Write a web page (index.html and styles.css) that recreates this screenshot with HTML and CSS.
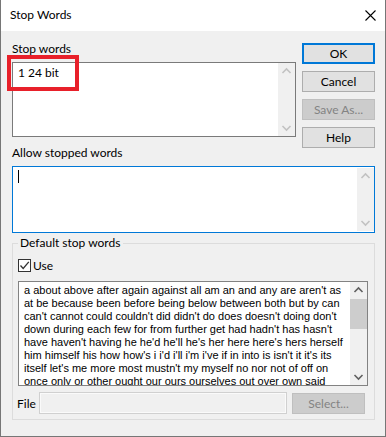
FILE: index.html
```html
<!DOCTYPE html>
<html>
<head>
<meta charset="utf-8">
<link rel="stylesheet" href="styles.css">
</head>
<body>
<div class="window">
  <div class="titlebar">
    <span class="title">Stop Words</span>
    <svg class="close" width="11" height="11" viewBox="0 0 11 11"><path d="M0.5 0.5 L10.5 10.5 M10.5 0.5 L0.5 10.5" stroke="#000" stroke-width="1.1" fill="none"/></svg>
  </div>
  <div class="content">
    <div class="toprow">
      <div class="leftcol">
        <div class="label lbl-stop">Stop words</div>
        <div class="textbox stopbox">
          <div class="tb-text">1 24 bit</div>
          <div class="vscroll">
            <svg class="arrow" width="17" height="17" viewBox="0 0 17 17"><path d="M4.5 10 L8.5 6 L12.5 10" stroke="#c2c2c2" stroke-width="1.6" fill="none"/></svg>
            <svg class="arrow" width="17" height="17" viewBox="0 0 17 17"><path d="M4.5 7 L8.5 11 L12.5 7" stroke="#c2c2c2" stroke-width="1.6" fill="none"/></svg>
          </div>
        </div>
      </div>
      <div class="buttons">
        <div class="btn btn-default">OK</div>
        <div class="btn">Cancel</div>
        <div class="btn btn-disabled">Save As...</div>
        <div class="btn">Help</div>
      </div>
    </div>
    <div class="label lbl-allow">Allow stopped words</div>
    <div class="textbox allowbox">
      <div class="tb-text"><span class="caret"></span></div>
      <div class="vscroll">
        <svg class="arrow" width="17" height="17" viewBox="0 0 17 17"><path d="M4.5 10 L8.5 6 L12.5 10" stroke="#c2c2c2" stroke-width="1.6" fill="none"/></svg>
        <svg class="arrow" width="17" height="17" viewBox="0 0 17 17"><path d="M4.5 7 L8.5 11 L12.5 7" stroke="#c2c2c2" stroke-width="1.6" fill="none"/></svg>
      </div>
    </div>
    <fieldset class="group">
      <legend>Default stop words</legend>
      <label class="check">
        <span class="box"><svg width="11" height="11" viewBox="0 0 11 11"><path d="M1.5 5.5 L4.2 8.5 L9.8 1.8" stroke="#333" stroke-width="1.3" fill="none"/></svg></span>
        <span>Use</span>
      </label>
      <div class="listbox">
        <div class="list-text">a about above after again against all am an and any are aren't as
at be because been before being below between both but by can
can't cannot could couldn't did didn't do does doesn't doing don't
down during each few for from further get had hadn't has hasn't
have haven't having he he'd he'll he's her here here's hers herself
him himself his how how's i i'd i'll i'm i've if in into is isn't it it's its
itself let's me more most mustn't my myself no nor not of off on
once only or other ought our ours ourselves out over own said</div>
        <div class="vscroll list-scroll">
          <svg class="arrow" width="17" height="17" viewBox="0 0 17 17"><path d="M4.5 10 L8.5 6 L12.5 10" stroke="#606060" stroke-width="1.6" fill="none"/></svg>
          <div class="thumb"></div>
          <div class="track"></div>
          <svg class="arrow" width="17" height="17" viewBox="0 0 17 17"><path d="M4.5 7 L8.5 11 L12.5 7" stroke="#606060" stroke-width="1.6" fill="none"/></svg>
        </div>
      </div>
      <div class="filerow">
        <span class="file-label">File</span>
        <div class="filebox"></div>
        <div class="btn btn-disabled select-btn">Select...</div>
      </div>
    </fieldset>
  </div>
  <div class="redmark"></div>
</div>
</body>
</html>
```

FILE: styles.css
```css
* { box-sizing: border-box; }
html, body { margin: 0; padding: 0; background: #f0f0f0; }
body {
  font-family: Lato, "Noto Sans", sans-serif;
  font-size: 12px;
  color: #000;
}
.window {
  position: relative;
  width: 386px;
  height: 437px;
  background: #f0f0f0;
  border: 1px solid #767676;
  border-top: none;
  overflow: hidden;
}
.titlebar {
  height: 31px;
  background: #fff;
  display: flex;
  align-items: center;
  justify-content: space-between;
  padding: 0 9px 0 9px;
}
.title { font-size: 12px; line-height: 14px; margin-top: -1px; }
.close { margin-top: -1px; }
.content {
  padding: 12px 10px 0 11px;
}
.toprow {
  display: flex;
  gap: 6px;
  height: 105px;
}
.leftcol { width: 284px; display: flex; flex-direction: column; }
.label { line-height: 12px; white-space: nowrap; }
.lbl-stop { height: 19px; margin-top: 0; }
.lbl-allow { line-height: 10px; margin-bottom: 8px; }
.textbox {
  position: relative;
  background: #fff;
  border: 1px solid #7a7a7a;
  display: flex;
}
.stopbox { height: 75px; }
.allowbox { height: 67px; border-color: #0078d7; width: 363px; }
.tb-text {
  flex: 1;
  padding: 3px 5px;
  line-height: 14px;
}
.caret {
  display: inline-block;
  width: 1px;
  height: 13px;
  background: #000;
  vertical-align: top;
  margin-top: 0;
}
.vscroll {
  width: 17px;
  background: #f0f0f0;
  display: flex;
  flex-direction: column;
  justify-content: space-between;
  flex: none;
  margin: 1px 0;
}
.stopbox .vscroll { margin: 0; }
.arrow { display: block; flex: none; }
.buttons {
  width: 73px;
  display: flex;
  flex-direction: column;
  gap: 7px;
}
.btn {
  height: 21px;
  background: #e1e1e1;
  border: 1px solid #adadad;
  display: flex;
  align-items: center;
  justify-content: center;
  line-height: 14px;
  white-space: nowrap;
}
.btn-default { border: 2px solid #0078d7; }
.btn-disabled { background: #cccccc; border-color: #bfbfbf; color: #838383; }

.group {
  margin: 3px 0 0 0;
  width: 363px;
  border: 1px solid #dcdcdc;
  padding: 0 6px 5px 5px;
}
.group legend {
  padding: 0 3px 0 2px;
  margin-left: 0;
  line-height: 14px;
}
.check {
  display: flex;
  align-items: center;
  gap: 2px;
  margin-top: 9px;
  height: 13px;
  line-height: 14px;
}
.check .box {
  width: 13px;
  height: 13px;
  border: 1px solid #333;
  background: #fff;
  display: flex;
  align-items: center;
  justify-content: center;
}
.check .box svg { display: block; }
.listbox {
  margin-top: 9px;
  width: 350px;
  height: 105px;
  background: #fff;
  border: 1px solid #828282;
  display: flex;
}
.list-text {
  flex: 1;
  overflow: hidden;
  white-space: pre;
  font-family: "Liberation Sans", Arial, sans-serif;
  font-size: 11px;
  line-height: 13px;
  padding: 2px 0 0 5px;
}
.list-scroll { margin: 0; justify-content: flex-start; }
.thumb { height: 30px; background: #cdcdcd; flex: none; }
.track { flex: 1; }
.filerow {
  margin-top: 7px;
  display: flex;
  align-items: center;
  height: 21px;
}
.file-label { width: 22px; margin-left: -1px; line-height: 14px; }
.filebox {
  width: 248px;
  height: 22px;
  margin-top: -1px;
  border: 1px solid #d0d0d0;
  background: #f0f0f0;
  box-shadow: inset 0 0 0 1px #fafafa;
}
.select-btn { width: 73px; margin-left: 5px; }
.redmark {
  position: absolute;
  left: 6px;
  top: 55px;
  width: 72px;
  height: 36px;
  border: 4px solid #e8202a;
}
```
